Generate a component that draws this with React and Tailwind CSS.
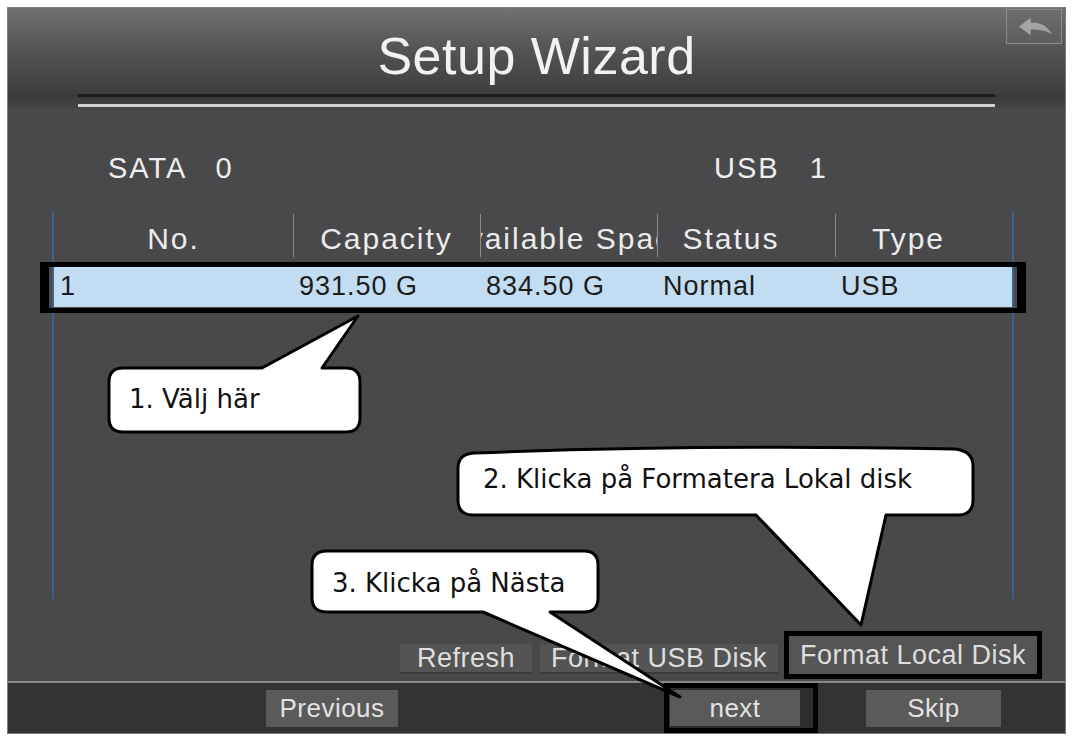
import React from 'react';

const sans = { fontFamily: '"Liberation Sans", Arial, sans-serif' };
const verd = { fontFamily: '"DejaVu Sans", Verdana, sans-serif' };

const cols = [
  { label: 'No.', w: 'w-[239px]', head: '', value: '1' },
  { label: 'Capacity', w: 'w-[187px]', head: '', value: '931.50 G' },
  { label: 'Available Space', w: 'w-[177px]', head: '', value: '834.50 G' },
  { label: 'Status', w: 'w-[178px]', head: 'pr-[30px]', value: 'Normal' },
  { label: 'Type', w: 'w-[177px]', head: 'pr-[30px]', value: 'USB' },
];

const BackIcon = () => (
  <svg viewBox="0 0 55 34" className="w-full h-full">
    <path d="M12 17 L24 8 L24 13 C34 13 41 16 46 25 C40 21 33 20 24 20 L24 26 Z" fill="#a3a3a3" />
  </svg>
);

const Callouts = () => (
  <>
    <svg className="absolute inset-0 pointer-events-none" width="1073" height="742" viewBox="0 0 1073 742">
      <g fill="#ffffff" stroke="#000000" strokeWidth="3" strokeLinejoin="round">
        <path d="M123 368 L262 368 L358 316 L322 368 L346 368 Q360 368 360 382 L360 418 Q360 432 346 432 L123 432 Q109 432 109 418 L109 382 Q109 368 123 368 Z" />
        <path d="M474 453 Q700 444 955 449 Q973 451 973 466 L973 500 Q973 515 958 515 L886 515 L861 625 L756 515 L473 515 Q458 515 458 500 L458 468 Q458 454 474 453 Z" />
        <path d="M327 551 L584 551 Q598 551 598 565 L598 598 Q598 612 584 612 L550 612 L680 697 L483 612 L327 612 Q312 612 312 598 L312 565 Q312 551 327 551 Z" />
      </g>
    </svg>
    <div style={verd} className="absolute left-[129px] top-[386px] text-[26px] leading-none text-[#111] whitespace-nowrap">1. Välj här</div>
    <div style={verd} className="absolute left-[483px] top-[466px] text-[26px] leading-none text-[#111] whitespace-nowrap">2. Klicka på Formatera Lokal disk</div>
    <div style={verd} className="absolute left-[332px] top-[570px] text-[26px] leading-none text-[#111] whitespace-nowrap">3. Klicka på Nästa</div>
  </>
);

export default function App() {
  return (
    <div className="relative w-[1073px] h-[742px] bg-white overflow-hidden" style={sans}>
      <div className="ml-[7px] mt-[7px] w-[1059px] h-[727px] flex flex-col border border-[#7a7a7a] bg-[#49494b]">
        {/* header */}
        <div className="relative h-[87px] bg-gradient-to-b from-[#717171] via-[#535353] to-[#3e3e3e] flex items-center justify-center pt-[10px]">
          <span className="text-[52px] leading-none tracking-[0.5px] text-[#f2f2f2]">Setup Wizard</span>
          <div className="absolute right-[3px] top-[1px] w-[56px] h-[35px] border border-[#8c8c8c] bg-[#6a6a6a]/40">
            <BackIcon />
          </div>
        </div>
        <div className="h-[14px] bg-gradient-to-b from-[#383838] to-[#454545] px-[70px]">
          <div className="h-[3px] bg-[#1b1b1b]" />
          <div className="h-[7px]" />
          <div className="h-[3px] bg-[#d2d2d2]" />
        </div>

        {/* body */}
        <div className="flex-1 flex flex-col">
          <div className="flex pt-[43px] h-[77px] text-[29px] leading-[34px] tracking-[2px] text-[#eeeeee]">
            <div className="flex gap-[28px] pl-[100px] w-[706px]">
              <span>SATA</span>
              <span>0</span>
            </div>
            <div className="flex gap-[30px]">
              <span>USB</span>
              <span>1</span>
            </div>
          </div>

          <div className="ml-[44px] mt-[26px] w-[962px] h-[388px] border-x-2 border-[#3d6288]">
            <div className="flex h-[48px]">
              {cols.map((c, i) => (
                <div key={c.label} className={`${c.w} relative flex items-center justify-center overflow-hidden whitespace-nowrap ${c.head}`}>
                  {i > 0 && <div className="absolute left-0 top-[3px] bottom-[2px] w-px bg-[#8d8d8d]" />}
                  <span className="text-[30px] leading-none tracking-[2px] pt-[8px] text-[#ececec]">{c.label}</span>
                </div>
              ))}
            </div>
            <div className="relative mt-[7px] h-[41px] flex bg-[#c2ddf1]">
              {cols.map((c) => (
                <div key={c.label} className={`${c.w} flex items-center pl-[6px] text-[27px] leading-none tracking-[1px] text-[#1c1c1c]`}>
                  {c.value}
                </div>
              ))}
              <div className="absolute -left-[14px] -right-[14px] -top-[4px] -bottom-[6px] border-y-[5px] border-x-[9px] border-black" />
            </div>
          </div>

          <div className="mt-[32px] h-[48px] flex justify-end pr-[23px] text-[27px] leading-none tracking-[0.5px] text-[#dedede]">
            <div className="mt-[13px] w-[132px] h-[30px] bg-[#545454] border-b-2 border-[#3b3b3b] flex items-center justify-center">Refresh</div>
            <div className="mt-[13px] ml-[8px] w-[238px] h-[30px] bg-[#545454] border-b-2 border-[#3b3b3b] flex items-center justify-center">Format USB Disk</div>
            <div className="ml-[6px] w-[258px] h-[48px] border-[5px] border-black bg-[#555555] flex items-center justify-center">Format Local Disk</div>
          </div>
        </div>

        {/* footer */}
        <div className="h-[52px] mt-[2px] border-t-2 border-[#8a8a8a] bg-[#333333] flex items-center text-[26px] leading-none tracking-[0.5px] text-[#e2e2e2]">
          <div className="ml-[258px] w-[132px] h-[37px] bg-[#5a5a5a] flex items-center justify-center">Previous</div>
          <div className="ml-[266px] w-[154px] h-[50px] border-[5px] border-black bg-[#2c2c2c] flex items-center pl-[1px]">
            <div className="w-[130px] h-[36px] bg-[#5a5a5a] flex items-center justify-center">next</div>
          </div>
          <div className="ml-[48px] w-[135px] h-[37px] bg-[#5a5a5a] flex items-center justify-center">Skip</div>
        </div>
      </div>
      <Callouts />
    </div>
  );
}
